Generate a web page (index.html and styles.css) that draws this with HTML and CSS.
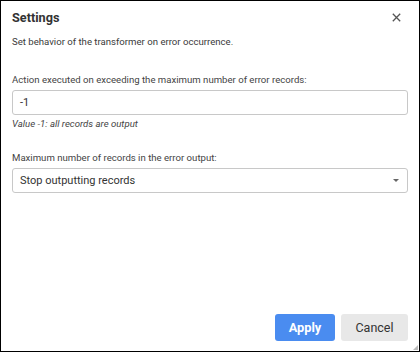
FILE: index.html
```html
<!DOCTYPE html>
<html>
<head>
<meta charset="utf-8">
<link rel="stylesheet" href="styles.css">
</head>
<body>
<div class="dialog">
  <div class="header">
    <div class="title">Settings</div>
    <svg class="close" width="9" height="9" viewBox="0 0 9 9"><path d="M0.8 0.8L8.2 8.2M8.2 0.8L0.8 8.2" stroke="#555" stroke-width="1.3" fill="none"/></svg>
  </div>
  <div class="body">
    <div class="desc">Set behavior of the transformer on error occurrence.</div>
    <div class="field first">
      <div class="label">Action executed on exceeding the maximum number of error records:</div>
      <div class="input">-1</div>
      <div class="hint">Value -1: all records are output</div>
    </div>
    <div class="field second">
      <div class="label">Maximum number of records in the error output:</div>
      <div class="input select"><span>Stop outputting records</span><span class="arrow"></span></div>
    </div>
  </div>
  <div class="footer">
    <button class="btn apply">Apply</button>
    <button class="btn cancel">Cancel</button>
  </div>
  <div class="grip"></div>
</div>
</body>
</html>
```
FILE: styles.css
```css
* { box-sizing: border-box; }
html, body { margin: 0; padding: 0; background: #fff; }
body { font-family: Roboto, "Noto Sans", sans-serif; color: #333; }
.dialog {
  width: 420px; height: 352px; border: 1px solid #000;
  display: flex; flex-direction: column; position: relative; background: #fff;
}
.header {
  display: flex; justify-content: space-between; align-items: center;
  padding: 0 18px 0 11px; height: 33px;
}
.title { font-size: 12.7px; font-weight: bold; color: #333; }
.close { display: block; }
.body { padding: 0 11px; flex: 1; }
.desc { font-size: 9.6px; margin-top: 2px; line-height: 12px; color: #3a3a3a; }
.field.first { margin-top: 26px; }
.field.second { margin-top: 22px; }
.label { font-size: 9.6px; line-height: 12px; color: #444; }
.input {
  margin-top: 4px; height: 25px; border: 1px solid #c8c8c8; border-radius: 3px;
  padding: 0 7px; font-size: 11px; line-height: 23px; color: #333;
}
.select { display: flex; justify-content: space-between; align-items: center; }
.arrow {
  width: 0; height: 0; border-left: 3px solid transparent; border-right: 3px solid transparent;
  border-top: 3px solid #666; margin-right: 1px;
}
.hint { font-size: 9.6px; font-style: italic; line-height: 12px; margin-top: 3px; color: #444; }
.footer { display: flex; justify-content: flex-end; gap: 6px; padding: 0 11px 10px 0; }
.btn {
  height: 27px; border: none; border-radius: 3px; font-family: Roboto, sans-serif;
  font-size: 12.5px; padding: 0; cursor: pointer;
}
.apply { width: 60px; background: #4a8cf0; color: #fff; font-weight: bold; font-size: 12.8px; }
.cancel { width: 67px; background: #e8e8e8; color: #333; }
.grip {
  position: absolute; right: 1px; bottom: 1px; width: 0; height: 0;
  border-left: 5px solid transparent; border-bottom: 5px solid #bbb;
}
```
